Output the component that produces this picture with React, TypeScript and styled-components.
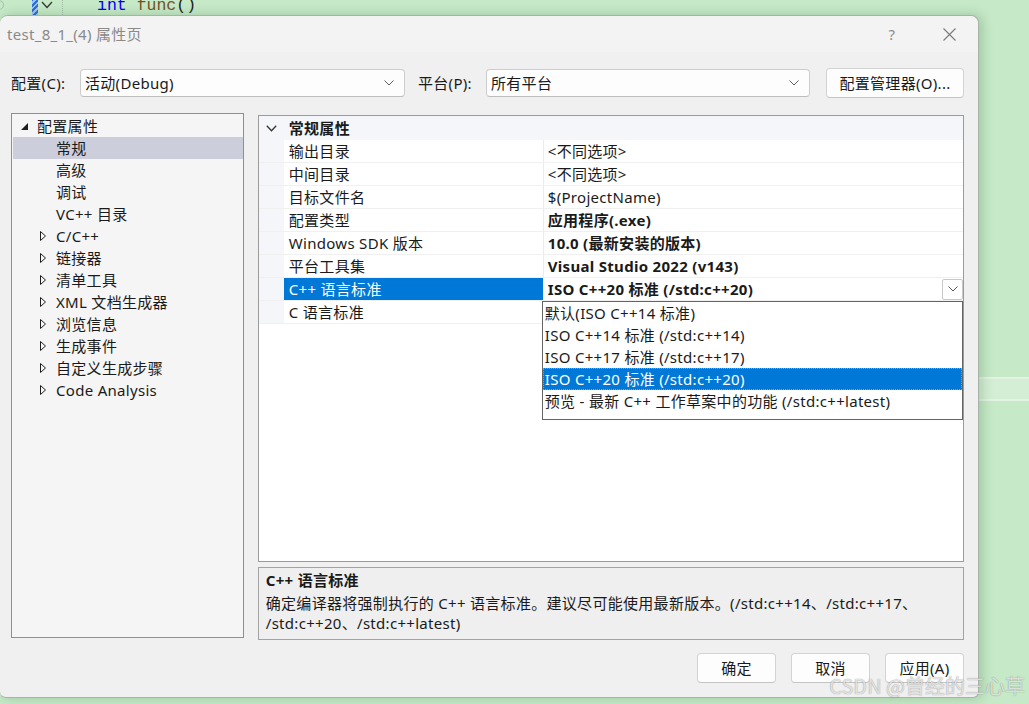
import React from "react";
import styled, { createGlobalStyle } from "styled-components";

const UI = `"Noto Sans", "Noto Sans CJK SC", sans-serif`;
const CJK = `"Noto Sans CJK SC", "Noto Sans", sans-serif`;

const GlobalStyle = createGlobalStyle`
  html, body { margin: 0; padding: 0; }
  body {
    width: 1029px;
    height: 704px;
    overflow: hidden;
    background: #c6e9c7;
    font-family: ${UI};
    color: #1a1a1a;
  }
`;

const Screen = styled.div`
  position: relative;
  width: 1029px;
  height: 704px;
  overflow: hidden;
  background: #c6e9c7;
`;

/* ---------- editor behind the dialog ---------- */
const Editor = styled.div`
  display: flex;
  flex-direction: column;
`;

const EditorLine = styled.div<{ $current?: boolean }>`
  height: 24px;
  box-sizing: border-box;
  display: flex;
  align-items: center;
  position: relative;
  ${(p) =>
    p.$current &&
    `background: #d4eed5; border-top: 2px solid #e2f3e2; border-bottom: 2px solid #e2f3e2;`}
  &:first-child {
    margin-top: -7px;
  }
`;

const GutterDot = styled.span`
  width: 10px;
  height: 10px;
  margin-left: -6px;
  border-radius: 50%;
  border: 1px solid #a9bfaa;
  box-sizing: border-box;
`;

const ChangeMarker = styled.span`
  width: 6px;
  height: 24px;
  margin-left: 28px;
  background: repeating-linear-gradient(135deg, #2f6fd8 0 2px, #9fc2f5 2px 4px);
`;

const FoldChevron = styled.svg`
  width: 12px;
  height: 8px;
  margin-left: 3px;
`;

const IndentGuide = styled.span`
  width: 0;
  height: 24px;
  margin-left: 9px;
  border-left: 1px dotted #9fb9a0;
`;

const Code = styled.span`
  margin-left: 34px;
  font-family: "Liberation Mono", "DejaVu Sans Mono", monospace;
  font-size: 16.5px;
  white-space: pre;
`;

const Tok = styled.span<{ $c: string }>`
  color: ${(p) => p.$c};
`;

/* ---------- dialog ---------- */
const Dialog = styled.div`
  position: absolute;
  left: 0;
  top: 15px;
  width: 979px;
  height: 683px;
  box-sizing: border-box;
  background: #f0f0f0;
  border: 1px solid #a7b2a8;
  border-left: none;
  border-radius: 8px 8px 6px 6px;
  box-shadow: 3px 0 12px rgba(20, 70, 25, 0.22);
  display: flex;
  flex-direction: column;
  font-size: 15px;
  letter-spacing: 0.3px;
`;

const TitleBar = styled.div`
  height: 36px;
  background: #f3f3f3;
  border-radius: 8px 8px 0 0;
  display: flex;
  align-items: center;
  padding-left: 7px;
  padding-right: 6px;
`;

const Title = styled.div`
  flex: 1;
  color: #8a8a8a;
  font-size: 15px;
  line-height: 20px;
`;

const TitleButton = styled.div`
  width: 46px;
  height: 36px;
  display: flex;
  align-items: center;
  justify-content: center;
  color: #8c8c8c;
  font-size: 15px;
  & + & {
    margin-left: 11px;
  }
`;

const Content = styled.div`
  flex: 1;
  display: flex;
  flex-direction: column;
  padding: 0 14px 15px 11px;
`;

const Toolbar = styled.div`
  margin-top: 16px;
  height: 30px;
  display: flex;
  align-items: center;
`;

const FieldLabel = styled.label<{ $w: number; $ml?: number }>`
  width: ${(p) => p.$w}px;
  margin-left: ${(p) => p.$ml ?? 0}px;
  line-height: 20px;
  white-space: nowrap;
`;

const Select = styled.div<{ $w: number }>`
  width: ${(p) => p.$w}px;
  height: 28px;
  box-sizing: border-box;
  border: 1px solid #cdcdcd;
  border-bottom-color: #bdbdbd;
  border-radius: 4px;
  background: #fdfdfd;
  display: flex;
  align-items: center;
  padding: 0 10px 0 4px;
  line-height: 20px;
`;

const SelectText = styled.span`
  flex: 1;
`;

const SmallChevron = styled.svg`
  width: 10px;
  height: 6px;
`;

const PushButton = styled.button<{ $w: number }>`
  width: ${(p) => p.$w}px;
  height: 30px;
  box-sizing: border-box;
  border: 1px solid #d3d3d3;
  border-bottom-color: #c4c4c4;
  border-radius: 4px;
  background: #fdfdfd;
  font-family: ${UI};
  font-size: 15px;
  letter-spacing: 0.3px;
  color: #1a1a1a;
  padding: 0;
  line-height: 20px;
`;

const ManagerButton = styled(PushButton)`
  margin-left: auto;
`;

const Main = styled.div`
  margin-top: 15px;
  display: flex;
  align-items: flex-start;
  gap: 14px;
`;

const Tree = styled.div`
  width: 233px;
  height: 525px;
  box-sizing: border-box;
  border: 1px solid #8e8f94;
  background: #f5f5f5;
  padding: 1px 0 0 1px;
  display: flex;
  flex-direction: column;
`;

const TreeRow = styled.div<{ $level: number; $selected?: boolean }>`
  height: 22px;
  display: flex;
  align-items: center;
  padding-left: ${(p) => (p.$level === 0 ? 8 : 27)}px;
  background: ${(p) => (p.$selected ? "#cccedb" : "transparent")};
  line-height: 20px;
  white-space: nowrap;
`;

const Expander = styled.span`
  width: 16px;
  height: 22px;
  display: flex;
  align-items: center;
`;

const RightColumn = styled.div`
  margin-top: 2px;
  width: 707px;
  display: flex;
  flex-direction: column;
  gap: 5px;
`;

const Grid = styled.div`
  height: 447px;
  box-sizing: border-box;
  border: 1px solid #9b9b9b;
  background: #ffffff;
  display: flex;
  flex-direction: column;
`;

const CategoryRow = styled.div`
  height: 24px;
  display: flex;
  align-items: center;
  background: #f4f6f9;
  font-weight: 700;
  line-height: 20px;
`;

const CategoryName = styled.div`
  padding-left: 5px;
`;

const MarginCell = styled.div`
  width: 25px;
  align-self: stretch;
  background: #f4f6f9;
  display: flex;
  align-items: center;
  justify-content: center;
`;

const PropRow = styled.div`
  height: 23px;
  box-sizing: border-box;
  border-bottom: 1px solid #f0f0f0;
  display: flex;
`;

const NameCell = styled.div<{ $selected?: boolean }>`
  width: 260px;
  box-sizing: border-box;
  border-right: 1px solid #ececec;
  padding-left: 5px;
  display: flex;
  align-items: center;
  background: ${(p) => (p.$selected ? "#0078d7" : "#ffffff")};
  color: ${(p) => (p.$selected ? "#ffffff" : "#1a1a1a")};
  line-height: 20px;
  white-space: nowrap;
`;

const ValueCell = styled.div<{ $bold?: boolean }>`
  flex: 1;
  position: relative;
  display: flex;
  align-items: center;
  padding-left: 4px;
  font-weight: ${(p) => (p.$bold ? 700 : 400)};
  line-height: 20px;
  white-space: nowrap;
`;

const ValueText = styled.span`
  flex: 1;
`;

const DropButton = styled.div`
  width: 21px;
  height: 21px;
  box-sizing: border-box;
  border: 1px solid #c9c9c9;
  border-radius: 2px;
  background: #ffffff;
  display: flex;
  align-items: center;
  justify-content: center;
`;

const DropList = styled.div`
  position: absolute;
  top: calc(100% + 1px);
  left: -2px;
  right: 0;
  height: 119px;
  box-sizing: border-box;
  border: 1px solid #646464;
  background: #ffffff;
  z-index: 2;
  font-weight: 400;
  display: flex;
  flex-direction: column;
`;

const DropItem = styled.div<{ $active?: boolean }>`
  height: 22px;
  display: flex;
  align-items: center;
  padding-left: 2px;
  line-height: 20px;
  background: ${(p) => (p.$active ? "#0078d7" : "transparent")};
  color: ${(p) => (p.$active ? "#ffffff" : "#1a1a1a")};
  outline: ${(p) => (p.$active ? "1px dotted #f08a1c" : "none")};
  outline-offset: -1px;
`;

const Description = styled.div`
  height: 73px;
  box-sizing: border-box;
  border: 1px solid #a3a3a3;
  background: #efefef;
  padding: 2px 7px 0;
  line-height: 20px;
`;

const DescTitle = styled.div`
  font-weight: 700;
`;

const DescText = styled.div`
  margin-top: 3px;
`;

const Footer = styled.div`
  margin-top: 13px;
  display: flex;
  justify-content: flex-end;
  gap: 15px;
`;

const Watermark = styled.div`
  position: absolute;
  right: 4px;
  bottom: 5px;
  font-family: ${CJK};
  font-size: 20px;
  line-height: 26px;
  color: rgba(255, 255, 255, 0.75);
  text-shadow: 0 0 1px rgba(0, 0, 0, 0.5);
  pointer-events: none;
  z-index: 5;
`;

/* ---------- icons ---------- */
const Chevron = ({ color = "#606060" }: { color?: string }) => (
  <SmallChevron viewBox="0 0 10 6">
    <polyline points="0.5,0.5 5,5 9.5,0.5" fill="none" stroke={color} strokeWidth="1" />
  </SmallChevron>
);

const ExpandedTri = () => (
  <svg width="7" height="7" viewBox="0 0 7 7">
    <polygon points="7,0 7,7 0,7" fill="#1e1e1e" />
  </svg>
);

const CollapsedTri = () => (
  <svg width="6" height="10" viewBox="0 0 6 10">
    <polygon points="0.5,0.5 5.5,5 0.5,9.5" fill="none" stroke="#1e1e1e" strokeWidth="1" />
  </svg>
);

const CategoryChevron = () => (
  <svg width="11" height="7" viewBox="0 0 11 7">
    <polyline points="0.8,0.8 5.5,5.8 10.2,0.8" fill="none" stroke="#333" strokeWidth="1.3" />
  </svg>
);

const CloseIcon = () => (
  <svg width="13" height="13" viewBox="0 0 13 13">
    <path d="M0.5 0.5 L12.5 12.5 M12.5 0.5 L0.5 12.5" stroke="#7a7a7a" strokeWidth="1.1" />
  </svg>
);

/* ---------- data ---------- */
type TreeItem = { label: string; level: number; expander?: "open" | "closed"; selected?: boolean };
const treeItems: TreeItem[] = [
  { label: "配置属性", level: 0, expander: "open" },
  { label: "常规", level: 1, selected: true },
  { label: "高级", level: 1 },
  { label: "调试", level: 1 },
  { label: "VC++ 目录", level: 1 },
  { label: "C/C++", level: 1, expander: "closed" },
  { label: "链接器", level: 1, expander: "closed" },
  { label: "清单工具", level: 1, expander: "closed" },
  { label: "XML 文档生成器", level: 1, expander: "closed" },
  { label: "浏览信息", level: 1, expander: "closed" },
  { label: "生成事件", level: 1, expander: "closed" },
  { label: "自定义生成步骤", level: 1, expander: "closed" },
  { label: "Code Analysis", level: 1, expander: "closed" },
];

type Prop = { name: string; value: string; bold?: boolean; selected?: boolean };
const props: Prop[] = [
  { name: "输出目录", value: "<不同选项>" },
  { name: "中间目录", value: "<不同选项>" },
  { name: "目标文件名", value: "$(ProjectName)" },
  { name: "配置类型", value: "应用程序(.exe)", bold: true },
  { name: "Windows SDK 版本", value: "10.0 (最新安装的版本)", bold: true },
  { name: "平台工具集", value: "Visual Studio 2022 (v143)", bold: true },
  { name: "C++ 语言标准", value: "ISO C++20 标准 (/std:c++20)", bold: true, selected: true },
  { name: "C 语言标准", value: "" },
];

const options = [
  "默认(ISO C++14 标准)",
  "ISO C++14 标准 (/std:c++14)",
  "ISO C++17 标准 (/std:c++17)",
  "ISO C++20 标准 (/std:c++20)",
  "预览 - 最新 C++ 工作草案中的功能 (/std:c++latest)",
];

export default function App() {
  const editorLines = Array.from({ length: 18 }, (_, i) => i);
  return (
    <Screen>
      <GlobalStyle />
      <Editor>
        {editorLines.map((i) =>
          i === 0 ? (
            <EditorLine key={i}>
              <GutterDot />
              <ChangeMarker />
              <FoldChevron viewBox="0 0 12 8">
                <polyline points="1,1 6,6.5 11,1" fill="none" stroke="#333" strokeWidth="1.2" />
              </FoldChevron>
              <IndentGuide />
              <Code>
                <Tok $c="#0000ff">int</Tok> <Tok $c="#74531f">func</Tok>
                <Tok $c="#1e1e1e">()</Tok>
              </Code>
            </EditorLine>
          ) : (
            <EditorLine key={i} $current={i === 16} />
          )
        )}
      </Editor>

      <Dialog>
        <TitleBar>
          <Title>test_8_1_(4) 属性页</Title>
          <TitleButton>?</TitleButton>
          <TitleButton>
            <CloseIcon />
          </TitleButton>
        </TitleBar>

        <Content>
          <Toolbar>
            <FieldLabel $w={69}>配置(C):</FieldLabel>
            <Select $w={325}>
              <SelectText>活动(Debug)</SelectText>
              <Chevron />
            </Select>
            <FieldLabel $w={68} $ml={13}>
              平台(P):
            </FieldLabel>
            <Select $w={324}>
              <SelectText>所有平台</SelectText>
              <Chevron />
            </Select>
            <ManagerButton $w={138}>配置管理器(O)...</ManagerButton>
          </Toolbar>

          <Main>
            <Tree>
              {treeItems.map((t) => (
                <TreeRow key={t.label} $level={t.level} $selected={t.selected}>
                  <Expander>
                    {t.expander === "open" && <ExpandedTri />}
                    {t.expander === "closed" && <CollapsedTri />}
                  </Expander>
                  {t.label}
                </TreeRow>
              ))}
            </Tree>

            <RightColumn>
              <Grid>
                <CategoryRow>
                  <MarginCell>
                    <CategoryChevron />
                  </MarginCell>
                  <CategoryName>常规属性</CategoryName>
                </CategoryRow>
                {props.map((p) => (
                  <PropRow key={p.name}>
                    <MarginCell />
                    <NameCell $selected={p.selected}>{p.name}</NameCell>
                    <ValueCell $bold={p.bold}>
                      <ValueText>{p.value}</ValueText>
                      {p.selected && (
                        <>
                          <DropButton>
                            <Chevron color="#555" />
                          </DropButton>
                          <DropList>
                            {options.map((o, i) => (
                              <DropItem key={o} $active={i === 3}>
                                {o}
                              </DropItem>
                            ))}
                          </DropList>
                        </>
                      )}
                    </ValueCell>
                  </PropRow>
                ))}
              </Grid>

              <Description>
                <DescTitle>C++ 语言标准</DescTitle>
                <DescText>
                  确定编译器将强制执行的 C++ 语言标准。建议尽可能使用最新版本。(/std:c++14、/std:c++17、
                  <br />
                  /std:c++20、/std:c++latest)
                </DescText>
              </Description>
            </RightColumn>
          </Main>

          <Footer>
            <PushButton $w={79}>确定</PushButton>
            <PushButton $w={79}>取消</PushButton>
            <PushButton $w={79}>应用(A)</PushButton>
          </Footer>
        </Content>
      </Dialog>

      <Watermark>CSDN @曾经的三心草</Watermark>
    </Screen>
  );
}
